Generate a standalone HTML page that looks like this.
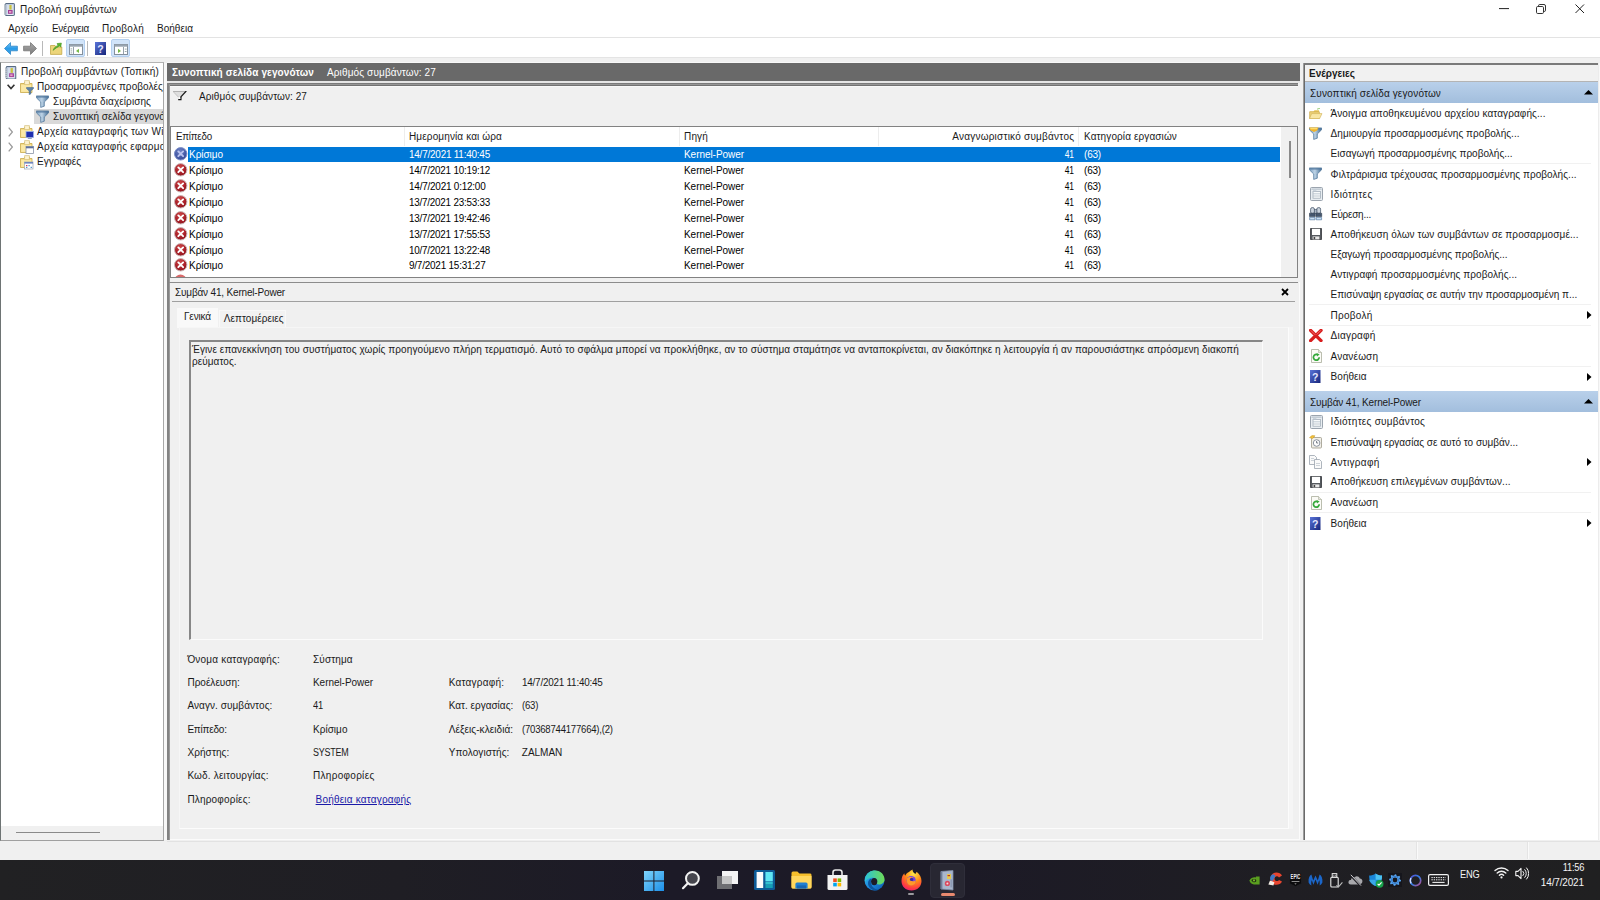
<!DOCTYPE html>
<html lang="el"><head><meta charset="utf-8"><title>Προβολή συμβάντων</title>
<style>
html,body{margin:0;padding:0;overflow:hidden;background:#f0f0f0}
body{width:1600px;height:900px;position:relative;overflow:hidden;background:#f0f0f0;font-family:"Liberation Sans", sans-serif;font-size:10px;line-height:14px;color:#1a1a1a}
div,svg,.t{position:absolute}
.t{white-space:pre;line-height:14px}
</style></head><body>
<div style="left:0px;top:0px;width:1600px;height:58px;background:#fff;"></div>
<div style="left:0px;top:37px;width:1600px;height:1px;background:#e3e3e3;"></div>
<div style="left:0px;top:57px;width:1600px;height:1px;background:#e4e4e4;"></div>
<span class="t" style="top:3.13px;left:20px;letter-spacing:0.206px;">Προβολή συμβάντων</span>
<span class="t" style="top:22.13px;left:8px;letter-spacing:0.023px;">Αρχείο</span>
<span class="t" style="top:22.13px;left:52px;letter-spacing:-0.220px;transform:scaleX(0.9861);transform-origin:0 50%;">Ενέργεια</span>
<span class="t" style="top:22.13px;left:102px;letter-spacing:0.263px;">Προβολή</span>
<span class="t" style="top:22.13px;left:157px;letter-spacing:0.025px;">Βοήθεια</span>
<div style="left:0px;top:62px;width:164px;height:779px;background:#fff;border:1px solid #6e7474;box-sizing:border-box;border-top-color:#b4b4b4;border-right-color:#a8a8a8;border-bottom-color:#a0a0a0"></div>
<div style="left:164px;top:63px;width:3px;height:777px;background:#f8f8f8;"></div>
<div style="left:34px;top:109px;width:129px;height:15px;background:#d9d9d9;"></div>
<div style="left:1px;top:826px;width:162px;height:14px;background:#f0f0f0;"></div>
<div style="left:16px;top:832px;width:84px;height:1px;background:#8a8a8a;"></div>
<div style="left:0;top:0;width:163px;height:840px;overflow:hidden">
<span class="t" style="top:65.14px;left:21px;letter-spacing:0.191px;">Προβολή συμβάντων (Τοπική)</span>
<span class="t" style="top:80.14px;left:37px;letter-spacing:0.068px;">Προσαρμοσμένες προβολές</span>
<span class="t" style="top:95.14px;left:53px;letter-spacing:0.086px;">Συμβάντα διαχείρισης</span>
<span class="t" style="top:110.14px;left:53px;letter-spacing:0.039px;">Συνοπτική σελίδα γεγονότων</span>
<span class="t" style="top:125.14px;left:37px;letter-spacing:0.267px;">Αρχεία καταγραφής των Windows</span>
<span class="t" style="top:140.13px;left:37px;letter-spacing:0.229px;">Αρχεία καταγραφής εφαρμογών και υπηρεσιών</span>
<span class="t" style="top:155.13px;left:37px;letter-spacing:0.012px;">Εγγραφές</span>
</div>
<div style="left:167px;top:62px;width:1133px;height:1px;background:#f8f8f8;"></div>
<div style="left:167px;top:63px;width:1133px;height:18px;background:#696969;"></div>
<div style="left:167px;top:81px;width:1133px;height:2px;background:#e6e6e6;"></div>
<div style="left:167px;top:83px;width:1131px;height:1px;background:#7a7a7a;"></div>
<div style="left:167px;top:84px;width:1131px;height:1px;background:#969696;"></div>
<div style="left:167px;top:85px;width:1131px;height:1px;background:#727272;"></div>
<div style="left:170px;top:86px;width:1128px;height:1px;background:#f8f8f8;"></div>
<span class="t" style="top:66.14px;left:172px;font-weight:700;color:#fff;letter-spacing:0.113px;">Συνοπτική σελίδα γεγονότων</span>
<span class="t" style="top:66.14px;left:327px;color:#fff;letter-spacing:0.129px;">Αριθμός συμβάντων: 27</span>
<div style="left:167px;top:83px;width:2px;height:757px;background:#828282;"></div>
<div style="left:169px;top:85px;width:1px;height:755px;background:#9a9a9a;"></div>
<span class="t" style="top:90.14px;left:199px;letter-spacing:0.081px;">Αριθμός συμβάντων: 27</span>
<div style="left:170px;top:126px;width:1128px;height:152px;background:#fff;border:1px solid #828282;box-sizing:border-box"></div>
<span class="t" style="top:130.13px;left:176px;letter-spacing:-0.220px;transform:scaleX(0.9798);transform-origin:0 50%;">Επίπεδο</span>
<span class="t" style="top:130.13px;left:409px;letter-spacing:0.126px;">Ημερομηνία και ώρα</span>
<span class="t" style="top:130.13px;left:684px;letter-spacing:0.160px;">Πηγή</span>
<span class="t" style="top:130.13px;right:525.77px;letter-spacing:0.231px;">Αναγνωριστικό συμβάντος</span>
<span class="t" style="top:130.13px;left:1084px;letter-spacing:0.110px;">Κατηγορία εργασιών</span>
<div style="left:188px;top:147px;width:1092px;height:15px;background:#0078d7;"></div>
<span class="t" style="top:148.44px;left:189px;color:#fff;letter-spacing:-0.042px;">Κρίσιμο</span>
<span class="t" style="top:148.44px;left:409px;color:#fff;letter-spacing:-0.220px;transform:scaleX(0.9939);transform-origin:0 50%;">14/7/2021 11:40:45</span>
<span class="t" style="top:148.44px;left:684px;color:#fff;letter-spacing:-0.049px;">Kernel-Power</span>
<span class="t" style="top:148.44px;right:526.22px;color:#fff;letter-spacing:-0.220px;transform:scaleX(0.8423);transform-origin:100% 50%;">41</span>
<span class="t" style="top:148.44px;left:1084px;color:#fff;letter-spacing:-0.199px;">(63)</span>
<span class="t" style="top:164.30px;left:189px;color:#000;letter-spacing:-0.042px;">Κρίσιμο</span>
<span class="t" style="top:164.30px;left:409px;color:#000;letter-spacing:-0.220px;transform:scaleX(0.9849);transform-origin:0 50%;">14/7/2021 10:19:12</span>
<span class="t" style="top:164.30px;left:684px;color:#000;letter-spacing:-0.049px;">Kernel-Power</span>
<span class="t" style="top:164.30px;right:526.22px;color:#000;letter-spacing:-0.220px;transform:scaleX(0.8423);transform-origin:100% 50%;">41</span>
<span class="t" style="top:164.30px;left:1084px;color:#000;letter-spacing:-0.199px;">(63)</span>
<span class="t" style="top:180.16px;left:189px;color:#000;letter-spacing:-0.042px;">Κρίσιμο</span>
<span class="t" style="top:180.16px;left:409px;color:#000;letter-spacing:-0.220px;transform:scaleX(0.9948);transform-origin:0 50%;">14/7/2021 0:12:00</span>
<span class="t" style="top:180.16px;left:684px;color:#000;letter-spacing:-0.049px;">Kernel-Power</span>
<span class="t" style="top:180.16px;right:526.22px;color:#000;letter-spacing:-0.220px;transform:scaleX(0.8423);transform-origin:100% 50%;">41</span>
<span class="t" style="top:180.16px;left:1084px;color:#000;letter-spacing:-0.199px;">(63)</span>
<span class="t" style="top:196.01px;left:189px;color:#000;letter-spacing:-0.042px;">Κρίσιμο</span>
<span class="t" style="top:196.01px;left:409px;color:#000;letter-spacing:-0.220px;transform:scaleX(0.9849);transform-origin:0 50%;">13/7/2021 23:53:33</span>
<span class="t" style="top:196.01px;left:684px;color:#000;letter-spacing:-0.049px;">Kernel-Power</span>
<span class="t" style="top:196.01px;right:526.22px;color:#000;letter-spacing:-0.220px;transform:scaleX(0.8423);transform-origin:100% 50%;">41</span>
<span class="t" style="top:196.01px;left:1084px;color:#000;letter-spacing:-0.199px;">(63)</span>
<span class="t" style="top:211.88px;left:189px;color:#000;letter-spacing:-0.042px;">Κρίσιμο</span>
<span class="t" style="top:211.88px;left:409px;color:#000;letter-spacing:-0.220px;transform:scaleX(0.9849);transform-origin:0 50%;">13/7/2021 19:42:46</span>
<span class="t" style="top:211.88px;left:684px;color:#000;letter-spacing:-0.049px;">Kernel-Power</span>
<span class="t" style="top:211.88px;right:526.22px;color:#000;letter-spacing:-0.220px;transform:scaleX(0.8423);transform-origin:100% 50%;">41</span>
<span class="t" style="top:211.88px;left:1084px;color:#000;letter-spacing:-0.199px;">(63)</span>
<span class="t" style="top:227.74px;left:189px;color:#000;letter-spacing:-0.042px;">Κρίσιμο</span>
<span class="t" style="top:227.74px;left:409px;color:#000;letter-spacing:-0.220px;transform:scaleX(0.9849);transform-origin:0 50%;">13/7/2021 17:55:53</span>
<span class="t" style="top:227.74px;left:684px;color:#000;letter-spacing:-0.049px;">Kernel-Power</span>
<span class="t" style="top:227.74px;right:526.22px;color:#000;letter-spacing:-0.220px;transform:scaleX(0.8423);transform-origin:100% 50%;">41</span>
<span class="t" style="top:227.74px;left:1084px;color:#000;letter-spacing:-0.199px;">(63)</span>
<span class="t" style="top:243.59px;left:189px;color:#000;letter-spacing:-0.042px;">Κρίσιμο</span>
<span class="t" style="top:243.59px;left:409px;color:#000;letter-spacing:-0.220px;transform:scaleX(0.9849);transform-origin:0 50%;">10/7/2021 13:22:48</span>
<span class="t" style="top:243.59px;left:684px;color:#000;letter-spacing:-0.049px;">Kernel-Power</span>
<span class="t" style="top:243.59px;right:526.22px;color:#000;letter-spacing:-0.220px;transform:scaleX(0.8423);transform-origin:100% 50%;">41</span>
<span class="t" style="top:243.59px;left:1084px;color:#000;letter-spacing:-0.199px;">(63)</span>
<span class="t" style="top:259.45px;left:189px;color:#000;letter-spacing:-0.042px;">Κρίσιμο</span>
<span class="t" style="top:259.45px;left:409px;color:#000;letter-spacing:-0.220px;transform:scaleX(0.9948);transform-origin:0 50%;">9/7/2021 15:31:27</span>
<span class="t" style="top:259.45px;left:684px;color:#000;letter-spacing:-0.049px;">Kernel-Power</span>
<span class="t" style="top:259.45px;right:526.22px;color:#000;letter-spacing:-0.220px;transform:scaleX(0.8423);transform-origin:100% 50%;">41</span>
<span class="t" style="top:259.45px;left:1084px;color:#000;letter-spacing:-0.199px;">(63)</span>
<div style="left:1281px;top:127px;width:16px;height:150px;background:#f0f0f0;"></div>
<div style="left:1289px;top:141px;width:2px;height:37px;background:#8a8a8a;"></div>
<div style="left:169px;top:282px;width:1129px;height:1px;background:#8c8c8c;"></div>
<span class="t" style="top:286.13px;left:175px;letter-spacing:-0.173px;">Συμβάν 41, Kernel-Power</span>
<div style="left:172px;top:301px;width:1123px;height:1px;background:#a0a0a0;"></div>
<div style="left:177px;top:308px;width:41px;height:20px;background:#f9f9f9;"></div>
<div style="left:179px;top:327px;width:1110px;height:502px;background:#f0f0f0;border-right:1px solid #fcfcfc;border-bottom:1px solid #fcfcfc;border-left:1px solid #f6f6f6;border-top:1px solid #f6f6f6;box-sizing:border-box"></div>
<div style="left:1289px;top:327px;width:4px;height:502px;background:#f5f5f5;"></div>
<div style="left:219px;top:310px;width:67px;height:17px;background:#f2f2f2;border:1px solid #f8f8f8;border-bottom:none;box-sizing:border-box"></div>
<div style="left:1299px;top:282px;width:1px;height:558px;background:#fbfbfb;"></div>
<div style="left:170px;top:839px;width:1130px;height:1px;background:#fbfbfb;"></div>
<span class="t" style="top:310.13px;left:184px;letter-spacing:-0.143px;">Γενικά</span>
<span class="t" style="top:312.13px;left:223.7px;letter-spacing:0.060px;">Λεπτομέρειες</span>
<div style="left:189px;top:340px;width:1074px;height:300px;background:#f0f0f0;border:1px solid #fbfbfb;border-top:2px solid #878787;border-left:2px solid #878787;box-sizing:border-box"></div>
<span class="t" style="top:343.13px;left:192px;letter-spacing:0.089px;">Έγινε επανεκκίνηση του συστήματος χωρίς προηγούμενο πλήρη τερματισμό. Αυτό το σφάλμα μπορεί να προκλήθηκε, αν το σύστημα σταμάτησε να ανταποκρίνεται, αν διακόπηκε η λειτουργία ή αν παρουσιάστηκε απρόσμενη διακοπή</span>
<span class="t" style="top:355.13px;left:192px;letter-spacing:0.062px;">ρεύματος.</span>
<div style="left:1303px;top:63px;width:297px;height:777px;background:#fff;border-left:2px solid #6a6a6a;border-top:2px solid #7a7a7a;box-sizing:border-box"></div>
<div style="left:1598px;top:63px;width:1px;height:777px;background:#ececec;"></div>
<div style="left:1599px;top:63px;width:1px;height:777px;background:#f8f8f8;"></div>
<div style="left:1303px;top:63px;width:1px;height:777px;background:#9c9c9c;"></div>
<div style="left:1305px;top:65px;width:293px;height:16px;background:#f1f1f1;"></div>
<div style="left:1305px;top:81px;width:293px;height:1px;background:#b4b4b4;"></div>
<span class="t" style="top:67.14px;left:1309px;font-weight:700;">Ενέργειες</span>
<div style="left:1305px;top:82px;width:293px;height:21px;background:linear-gradient(#b9d0ea,#a2bedd);"></div>
<span class="t" style="top:87.14px;left:1310px;letter-spacing:0.134px;">Συνοπτική σελίδα γεγονότων</span>
<div style="left:1305px;top:391px;width:293px;height:21px;background:linear-gradient(#b9d0ea,#a2bedd);"></div>
<span class="t" style="top:396.13px;left:1310px;letter-spacing:-0.130px;">Συμβάν 41, Kernel-Power</span>
<div style="left:0px;top:860px;width:1600px;height:40px;background:linear-gradient(90deg,#212123,#1f1e24 25%,#1c1a27 42%,#1c1a26 60%,#1f1e23 80%,#202021);"></div>
<svg style="left:4px;top:42px;" width="14" height="13" viewBox="0 0 14 13"><defs><linearGradient id="ba" x1="0" y1="0" x2="0" y2="1"><stop offset="0" stop-color="#7cc8f6"/><stop offset="0.5" stop-color="#2a9be8"/><stop offset="1" stop-color="#3aa4ea"/></linearGradient></defs><path d="M0.5 6.5 L6.5 0.6 V4.2 H13.4 V8.8 H6.5 V12.4Z" fill="url(#ba)" stroke="#2f86c8" stroke-width="0.8"/></svg>
<svg style="left:23px;top:42px;" width="14" height="13" viewBox="0 0 14 13"><defs><linearGradient id="fa" x1="0" y1="0" x2="0" y2="1"><stop offset="0" stop-color="#a8a8a8"/><stop offset="1" stop-color="#7c7c7c"/></linearGradient></defs><path d="M13.5 6.5 L7.5 0.6 V4.2 H0.6 V8.8 H7.5 V12.4Z" fill="url(#fa)" stroke="#767676" stroke-width="0.8"/></svg>
<div style="left:42px;top:41px;width:1px;height:15px;background:#b9b9b9;"></div>
<svg style="left:50px;top:42px;" width="13" height="13" viewBox="0 0 13 13"><path d="M0.5 3.5 H5 L6.4 5 H11.8 V12.4 H0.5Z" fill="#ecd57a" stroke="#c4a84a" stroke-width="0.8"/><path d="M3 8.4 C4 5.6 6 4 8 3.4 L7 1.6 L11.4 1 L10.8 5.2 L9.6 3.9 C7.4 5 5.4 6.6 3 8.4Z" fill="#5cb531" stroke="#3f8d1e" stroke-width="0.5"/></svg>
<div style="left:66px;top:39px;width:19px;height:18px;background:#d1e4f9;border:1px solid #b4d0f0;box-sizing:border-box;border-radius:2px"></div>
<svg style="left:69px;top:44px;" width="14" height="11" viewBox="0 0 14 11"><rect x="0.5" y="0.5" width="13" height="10" fill="#fff" stroke="#84909c" stroke-width="1"/><rect x="0.5" y="0.5" width="13" height="2.2" fill="#98a4b0"/><path d="M4.5 3V10.5" stroke="#8a96a2" stroke-width="0.9"/><path d="M10 4.8 V9 L7 6.9Z" fill="#76b947"/><rect x="1.6" y="4.4" width="1.6" height="1" fill="#9aa"/><rect x="1.6" y="6.4" width="1.6" height="1" fill="#9aa"/><rect x="1.6" y="8.4" width="1.6" height="1" fill="#9aa"/></svg>
<div style="left:87px;top:41px;width:1px;height:15px;background:#b9b9b9;"></div>
<svg style="left:95px;top:42px;" width="11" height="13" viewBox="0 0 11 13"><defs><linearGradient id="hg95_42" x1="0" y1="0" x2="1" y2="1"><stop offset="0" stop-color="#5a74d8"/><stop offset="1" stop-color="#16257a"/></linearGradient></defs><rect x="0" y="0" width="11" height="13" fill="url(#hg95_42)"/><text x="5.5" y="10.8" font-family="Liberation Sans, sans-serif" font-weight="700" font-size="10.5" fill="#e4e6ff" text-anchor="middle">?</text></svg>
<div style="left:111px;top:39px;width:19px;height:18px;background:#d1e4f9;border:1px solid #b4d0f0;box-sizing:border-box;border-radius:2px"></div>
<svg style="left:114px;top:44px;" width="14" height="11" viewBox="0 0 14 11"><rect x="0.5" y="0.5" width="13" height="10" fill="#fff" stroke="#84909c" stroke-width="1"/><rect x="0.5" y="0.5" width="13" height="2.2" fill="#98a4b0"/><path d="M9.5 3V10.5" stroke="#8a96a2" stroke-width="0.9"/><path d="M4 4.8 V9 L7 6.9Z" fill="#76b947"/><rect x="10.8" y="4.6" width="1.8" height="1" fill="#9aa"/><rect x="10.8" y="7" width="1.8" height="1" fill="#9aa"/></svg>
<svg style="left:3.6px;top:3px;" width="11.0" height="13.0" viewBox="0 0 11 13"><rect x="1.4" y="0.5" width="9" height="12" rx="0.6" fill="#b9c7dc" stroke="#586c84" stroke-width="1"/><rect x="0.2" y="1.4" width="1.6" height="10.4" fill="#9aa6b4"/><path d="M0.2 3H1.8M0.2 5H1.8M0.2 7H1.8M0.2 9H1.8M0.2 11H1.8" stroke="#e8ecf0" stroke-width="0.7"/><rect x="3" y="1.8" width="6.4" height="9.6" fill="#d5deec"/><rect x="5.4" y="2" width="2.2" height="4.6" fill="#c9c23c"/><rect x="4" y="7" width="4.6" height="3.8" fill="#a23c96"/><rect x="5" y="8" width="2.4" height="1.8" fill="#e6a2c6"/><rect x="3.2" y="11" width="6" height="0.8" fill="#eef2f8"/></svg>
<svg style="left:1499px;top:8px;" width="10" height="2" viewBox="0 0 10 2"><path d="M0 0.6H10" stroke="#222" stroke-width="1"/></svg>
<svg style="left:1536px;top:4px;" width="10" height="10" viewBox="0 0 10 10"><rect x="0.5" y="2.5" width="7" height="7" rx="1.2" fill="none" stroke="#333" stroke-width="1"/><path d="M2.5 2.3 V1.8 Q2.5 0.5 3.8 0.5 H8 Q9.5 0.5 9.5 2 V6.2 Q9.5 7.5 8.2 7.5 H7.8" fill="none" stroke="#333" stroke-width="1"/></svg>
<svg style="left:1575px;top:4px;" width="10" height="10" viewBox="0 0 10 10"><path d="M0.5 0.5 L9 9 M9 0.5 L0.5 9" stroke="#222" stroke-width="1"/></svg>
<svg style="left:5.4px;top:65.6px;" width="11.4" height="13.5" viewBox="0 0 11 13"><rect x="1.4" y="0.5" width="9" height="12" rx="0.6" fill="#b9c7dc" stroke="#586c84" stroke-width="1"/><rect x="0.2" y="1.4" width="1.6" height="10.4" fill="#9aa6b4"/><path d="M0.2 3H1.8M0.2 5H1.8M0.2 7H1.8M0.2 9H1.8M0.2 11H1.8" stroke="#e8ecf0" stroke-width="0.7"/><rect x="3" y="1.8" width="6.4" height="9.6" fill="#d5deec"/><rect x="5.4" y="2" width="2.2" height="4.6" fill="#c9c23c"/><rect x="4" y="7" width="4.6" height="3.8" fill="#a23c96"/><rect x="5" y="8" width="2.4" height="1.8" fill="#e6a2c6"/><rect x="3.2" y="11" width="6" height="0.8" fill="#eef2f8"/></svg>
<svg style="left:7px;top:84px;" width="8" height="6" viewBox="0 0 8 6"><path d="M0.6 0.8 L4 4.6 L7.4 0.8" fill="none" stroke="#333" stroke-width="1.6"/></svg>
<svg style="left:20px;top:80px;" width="14" height="15" viewBox="0 0 14 15"><path d="M0.5 3.5 H4 L5 2 H9.5 V3.5 H12 V12.5 H0.5Z" fill="#f5dc86" stroke="#c9a94a" stroke-width="0.8"/><path d="M1.2 5 H11.3 V11.8 H1.2Z" fill="#fbe9a6"/><path d="M4.6 0.6 H9.4 V4.6 H4.6Z" fill="#fdf3cf" stroke="#cdb56a" stroke-width="0.6"/><path d="M6.5 7.5 H13.5 V8.6 L10.8 11 V14 L9.2 14.6 V11 L6.5 8.6Z" fill="#5b82a8" stroke="#3f6288" stroke-width="0.5"/></svg>
<svg style="left:36px;top:95.4px;" width="13" height="13" viewBox="0 0 13 13"><defs><linearGradient id="fg36_95_4" x1="0" y1="0" x2="1" y2="0"><stop offset="0" stop-color="#7ea3c4"/><stop offset="0.45" stop-color="#bdd3e6"/><stop offset="1" stop-color="#3f6a92"/></linearGradient></defs><path d="M0.4 0.9 H12.6 V2.8 L8.3 7 V11.2 L4.7 12.4 V7 L0.4 2.8 Z" fill="url(#fg36_95_4)" stroke="#4a7196" stroke-width="0.7"/><path d="M0.8 1.3 H12.2 V2.5 H0.8Z" fill="#54799e"/></svg>
<svg style="left:36px;top:110.4px;" width="13" height="13" viewBox="0 0 13 13"><defs><linearGradient id="fg36_110_4" x1="0" y1="0" x2="1" y2="0"><stop offset="0" stop-color="#7ea3c4"/><stop offset="0.45" stop-color="#bdd3e6"/><stop offset="1" stop-color="#3f6a92"/></linearGradient></defs><path d="M0.4 0.9 H12.6 V2.8 L8.3 7 V11.2 L4.7 12.4 V7 L0.4 2.8 Z" fill="url(#fg36_110_4)" stroke="#4a7196" stroke-width="0.7"/><path d="M0.8 1.3 H12.2 V2.5 H0.8Z" fill="#54799e"/></svg>
<svg style="left:8px;top:127px;" width="5" height="10" viewBox="0 0 5 10"><path d="M0.7 0.7 L4.4 5 L0.7 9.3" fill="none" stroke="#9a9a9a" stroke-width="1.3"/></svg>
<svg style="left:20px;top:125px;" width="14" height="15" viewBox="0 0 14 15"><path d="M0.5 3.5 H4 L5 2 H9.5 V3.5 H12 V12.5 H0.5Z" fill="#f5dc86" stroke="#c9a94a" stroke-width="0.8"/><path d="M1.2 5 H11.3 V11.8 H1.2Z" fill="#fbe9a6"/><path d="M4.6 0.6 H9.4 V4.6 H4.6Z" fill="#fdf3cf" stroke="#cdb56a" stroke-width="0.6"/><rect x="6" y="6.5" width="7.5" height="6" fill="#1f2fb0" stroke="#9fb4e6" stroke-width="0.8"/><rect x="7.8" y="13" width="4" height="1" fill="#8ea0c8"/></svg>
<svg style="left:8px;top:142px;" width="5" height="10" viewBox="0 0 5 10"><path d="M0.7 0.7 L4.4 5 L0.7 9.3" fill="none" stroke="#9a9a9a" stroke-width="1.3"/></svg>
<svg style="left:20px;top:140px;" width="14" height="15" viewBox="0 0 14 15"><path d="M0.5 3.5 H4 L5 2 H9.5 V3.5 H12 V12.5 H0.5Z" fill="#f5dc86" stroke="#c9a94a" stroke-width="0.8"/><path d="M1.2 5 H11.3 V11.8 H1.2Z" fill="#fbe9a6"/><path d="M4.6 0.6 H9.4 V4.6 H4.6Z" fill="#fdf3cf" stroke="#cdb56a" stroke-width="0.6"/><rect x="6" y="6.5" width="7.5" height="7" fill="#fff" stroke="#8a94a8" stroke-width="0.8"/><rect x="6" y="6.5" width="7.5" height="1.8" fill="#5d6f9c"/></svg>
<svg style="left:20px;top:155px;" width="14" height="15" viewBox="0 0 14 15"><path d="M0.5 3.5 H4 L5 2 H9.5 V3.5 H12 V12.5 H0.5Z" fill="#f5dc86" stroke="#c9a94a" stroke-width="0.8"/><path d="M1.2 5 H11.3 V11.8 H1.2Z" fill="#fbe9a6"/><path d="M4.6 0.6 H9.4 V4.6 H4.6Z" fill="#fdf3cf" stroke="#cdb56a" stroke-width="0.6"/><rect x="4.5" y="7" width="8.5" height="7" fill="#fff" stroke="#9aa4b6" stroke-width="0.7"/><rect x="4.5" y="7" width="8.5" height="1.6" fill="#6f86c0"/><rect x="6" y="10" width="1.4" height="1.2" fill="#d35"/><rect x="8.4" y="10" width="1.4" height="1.2" fill="#59c"/><rect x="10.6" y="11.8" width="1.4" height="1.2" fill="#59c"/><rect x="6" y="11.8" width="1.4" height="1.2" fill="#59c"/></svg>
<svg style="left:173px;top:91px;" width="14" height="10" viewBox="0 0 14 10"><path d="M0.3 0.5 H13 L7.8 6 V8.6 H5.4 V6 Z" fill="#dedede"/><rect x="5.6" y="6" width="2" height="2.4" fill="#fff"/><path d="M0 0.5 H12.6" stroke="#b2b2b2" stroke-width="1"/><path d="M0.3 0.7 L5.5 6.2" stroke="#bcbcbc" stroke-width="0.9"/><path d="M13 0.3 L7.9 5.9" stroke="#1c1c1c" stroke-width="1.3" stroke-linecap="round"/><path d="M5.2 8.6 H8 V5.9" fill="none" stroke="#111" stroke-width="1.1"/></svg>
<svg style="left:174px;top:147.4px;" width="14" height="14" viewBox="0 0 14 14"><defs><radialGradient id="cg174_1474" cx="0.45" cy="0.3" r="0.8"><stop offset="0" stop-color="#6f83c4"/><stop offset="0.55" stop-color="#465aa6"/><stop offset="1" stop-color="#33468c"/></radialGradient></defs><circle cx="6.7" cy="6.8" r="6.2" fill="url(#cg174_1474)" stroke="#7a8cc8" stroke-width="1"/><path d="M4.3 4.4 L9.1 9.2 M9.1 4.4 L4.3 9.2" stroke="#b9c2ee" stroke-width="1.9" stroke-linecap="round"/></svg>
<svg style="left:174px;top:163.26px;" width="14" height="14" viewBox="0 0 14 14"><defs><radialGradient id="cg174_1632" cx="0.45" cy="0.3" r="0.8"><stop offset="0" stop-color="#cf4a4a"/><stop offset="0.55" stop-color="#a81f28"/><stop offset="1" stop-color="#8a141c"/></radialGradient></defs><circle cx="6.7" cy="6.8" r="6.2" fill="url(#cg174_1632)" stroke="#cdb9b9" stroke-width="1"/><path d="M4.3 4.4 L9.1 9.2 M9.1 4.4 L4.3 9.2" stroke="#fff" stroke-width="1.9" stroke-linecap="round"/></svg>
<svg style="left:174px;top:179.12px;" width="14" height="14" viewBox="0 0 14 14"><defs><radialGradient id="cg174_1791" cx="0.45" cy="0.3" r="0.8"><stop offset="0" stop-color="#cf4a4a"/><stop offset="0.55" stop-color="#a81f28"/><stop offset="1" stop-color="#8a141c"/></radialGradient></defs><circle cx="6.7" cy="6.8" r="6.2" fill="url(#cg174_1791)" stroke="#cdb9b9" stroke-width="1"/><path d="M4.3 4.4 L9.1 9.2 M9.1 4.4 L4.3 9.2" stroke="#fff" stroke-width="1.9" stroke-linecap="round"/></svg>
<svg style="left:174px;top:194.98000000000002px;" width="14" height="14" viewBox="0 0 14 14"><defs><radialGradient id="cg174_1949" cx="0.45" cy="0.3" r="0.8"><stop offset="0" stop-color="#cf4a4a"/><stop offset="0.55" stop-color="#a81f28"/><stop offset="1" stop-color="#8a141c"/></radialGradient></defs><circle cx="6.7" cy="6.8" r="6.2" fill="url(#cg174_1949)" stroke="#cdb9b9" stroke-width="1"/><path d="M4.3 4.4 L9.1 9.2 M9.1 4.4 L4.3 9.2" stroke="#fff" stroke-width="1.9" stroke-linecap="round"/></svg>
<svg style="left:174px;top:210.84px;" width="14" height="14" viewBox="0 0 14 14"><defs><radialGradient id="cg174_2108" cx="0.45" cy="0.3" r="0.8"><stop offset="0" stop-color="#cf4a4a"/><stop offset="0.55" stop-color="#a81f28"/><stop offset="1" stop-color="#8a141c"/></radialGradient></defs><circle cx="6.7" cy="6.8" r="6.2" fill="url(#cg174_2108)" stroke="#cdb9b9" stroke-width="1"/><path d="M4.3 4.4 L9.1 9.2 M9.1 4.4 L4.3 9.2" stroke="#fff" stroke-width="1.9" stroke-linecap="round"/></svg>
<svg style="left:174px;top:226.7px;" width="14" height="14" viewBox="0 0 14 14"><defs><radialGradient id="cg174_2267" cx="0.45" cy="0.3" r="0.8"><stop offset="0" stop-color="#cf4a4a"/><stop offset="0.55" stop-color="#a81f28"/><stop offset="1" stop-color="#8a141c"/></radialGradient></defs><circle cx="6.7" cy="6.8" r="6.2" fill="url(#cg174_2267)" stroke="#cdb9b9" stroke-width="1"/><path d="M4.3 4.4 L9.1 9.2 M9.1 4.4 L4.3 9.2" stroke="#fff" stroke-width="1.9" stroke-linecap="round"/></svg>
<svg style="left:174px;top:242.56px;" width="14" height="14" viewBox="0 0 14 14"><defs><radialGradient id="cg174_2425" cx="0.45" cy="0.3" r="0.8"><stop offset="0" stop-color="#cf4a4a"/><stop offset="0.55" stop-color="#a81f28"/><stop offset="1" stop-color="#8a141c"/></radialGradient></defs><circle cx="6.7" cy="6.8" r="6.2" fill="url(#cg174_2425)" stroke="#cdb9b9" stroke-width="1"/><path d="M4.3 4.4 L9.1 9.2 M9.1 4.4 L4.3 9.2" stroke="#fff" stroke-width="1.9" stroke-linecap="round"/></svg>
<svg style="left:174px;top:258.42px;" width="14" height="14" viewBox="0 0 14 14"><defs><radialGradient id="cg174_2584" cx="0.45" cy="0.3" r="0.8"><stop offset="0" stop-color="#cf4a4a"/><stop offset="0.55" stop-color="#a81f28"/><stop offset="1" stop-color="#8a141c"/></radialGradient></defs><circle cx="6.7" cy="6.8" r="6.2" fill="url(#cg174_2584)" stroke="#cdb9b9" stroke-width="1"/><path d="M4.3 4.4 L9.1 9.2 M9.1 4.4 L4.3 9.2" stroke="#fff" stroke-width="1.9" stroke-linecap="round"/></svg>
<div style="left:174px;top:274px;width:13px;height:3px;overflow:hidden"><svg style="left:0;top:0" width="13" height="13"><circle cx="6.5" cy="6.5" r="6" fill="#d86a6a"/></svg></div>
<div style="left:404px;top:127px;width:1px;height:19px;background:#ededed;"></div>
<div style="left:679px;top:127px;width:1px;height:19px;background:#ededed;"></div>
<div style="left:878px;top:127px;width:1px;height:19px;background:#ededed;"></div>
<div style="left:1078px;top:127px;width:1px;height:19px;background:#ededed;"></div>
<svg style="left:1281px;top:288px;" width="8" height="8" viewBox="0 0 8 8"><path d="M1 1 L7 7 M7 1 L1 7" stroke="#000" stroke-width="1.8"/></svg>
<span class="t" style="top:652.63px;left:187.4px;letter-spacing:0.212px;">Όνομα καταγραφής:</span>
<span class="t" style="top:676.13px;left:187.4px;letter-spacing:0.013px;">Προέλευση:</span>
<span class="t" style="top:699.13px;left:187.4px;letter-spacing:0.074px;">Αναγν. συμβάντος:</span>
<span class="t" style="top:722.63px;left:187.4px;letter-spacing:-0.220px;">Επίπεδο:</span>
<span class="t" style="top:746.13px;left:187.4px;letter-spacing:0.100px;">Χρήστης:</span>
<span class="t" style="top:769.13px;left:187.4px;letter-spacing:0.177px;">Κωδ. λειτουργίας:</span>
<span class="t" style="top:792.63px;left:187.4px;letter-spacing:0.188px;">Πληροφορίες:</span>
<span class="t" style="top:652.63px;left:313px;letter-spacing:0.116px;">Σύστημα</span>
<span class="t" style="top:676.13px;left:313px;letter-spacing:-0.049px;">Kernel-Power</span>
<span class="t" style="top:699.13px;left:313px;letter-spacing:-0.220px;transform:scaleX(0.9359);transform-origin:0 50%;">41</span>
<span class="t" style="top:722.63px;left:313px;letter-spacing:0.029px;">Κρίσιμο</span>
<span class="t" style="top:746.13px;left:313px;letter-spacing:-0.220px;transform:scaleX(0.8944);transform-origin:0 50%;">SYSTEM</span>
<span class="t" style="top:769.13px;left:313px;letter-spacing:0.293px;">Πληροφορίες</span>
<span class="t" style="top:792.63px;left:315.6px;color:#1a1aa8;letter-spacing:0.190px;text-decoration:underline;">Βοήθεια καταγραφής</span>
<span class="t" style="top:676.13px;left:448.7px;letter-spacing:0.228px;">Καταγραφή:</span>
<span class="t" style="top:699.13px;left:448.7px;">Κατ. εργασίας:</span>
<span class="t" style="top:722.63px;left:448.7px;letter-spacing:0.068px;">Λέξεις-κλειδιά:</span>
<span class="t" style="top:746.13px;left:448.7px;letter-spacing:0.090px;">Υπολογιστής:</span>
<span class="t" style="top:676.13px;left:521.8px;letter-spacing:-0.220px;transform:scaleX(0.9890);transform-origin:0 50%;">14/7/2021 11:40:45</span>
<span class="t" style="top:699.13px;left:521.8px;letter-spacing:-0.220px;transform:scaleX(0.9576);transform-origin:0 50%;">(63)</span>
<span class="t" style="top:722.63px;left:521.8px;letter-spacing:-0.220px;transform:scaleX(0.9545);transform-origin:0 50%;">(70368744177664),(2)</span>
<span class="t" style="top:746.13px;left:521.8px;letter-spacing:-0.010px;">ZALMAN</span>
<span class="t" style="top:107.14px;left:1330.6px;letter-spacing:0.095px;">Άνοιγμα αποθηκευμένου αρχείου καταγραφής...</span>
<svg style="left:1309px;top:108px;" width="14" height="11" viewBox="0 0 14 11"><path d="M0.8 3.5 H4.5 L5.5 2.3 H10 V4 H0.8Z" fill="#e8c65a"/><path d="M0.6 3.8 H10.4 V10.4 H0.6Z" fill="#eed27a" stroke="#c7a445" stroke-width="0.6"/><path d="M2.6 5.6 H13 L10.6 10.6 H0.5Z" fill="#f8e6a4" stroke="#cfae50" stroke-width="0.6"/><path d="M8 1.2 L11 0.2" stroke="#7dc15a" stroke-width="0.8"/></svg>
<span class="t" style="top:127.14px;left:1330.6px;letter-spacing:0.043px;">Δημιουργία προσαρμοσμένης προβολής...</span>
<svg style="left:1309px;top:127px;" width="13" height="13" viewBox="0 0 13 13"><defs><linearGradient id="fg1309_127" x1="0" y1="0" x2="1" y2="0"><stop offset="0" stop-color="#7ea3c4"/><stop offset="0.45" stop-color="#bdd3e6"/><stop offset="1" stop-color="#3f6a92"/></linearGradient></defs><path d="M0.4 0.9 H12.6 V2.8 L8.3 7 V11.2 L4.7 12.4 V7 L0.4 2.8 Z" fill="url(#fg1309_127)" stroke="#4a7196" stroke-width="0.7"/><path d="M0.8 1.3 H12.2 V2.5 H0.8Z" fill="#54799e"/><path d="M0 0.4 H9.6 L8.2 3.4 L5 5 L1.4 3.2Z" fill="#f0b42c"/><path d="M1 0.8H8.6L7.8 2.2H1.8Z" fill="#ffdc6a"/></svg>
<span class="t" style="top:147.13px;left:1330.6px;letter-spacing:0.010px;">Εισαγωγή προσαρμοσμένης προβολής...</span>
<span class="t" style="top:167.53px;left:1330.6px;letter-spacing:0.055px;">Φιλτράρισμα τρέχουσας προσαρμοσμένης προβολής...</span>
<svg style="left:1309px;top:167px;" width="13" height="13" viewBox="0 0 13 13"><defs><linearGradient id="fg1309_167" x1="0" y1="0" x2="1" y2="0"><stop offset="0" stop-color="#7ea3c4"/><stop offset="0.45" stop-color="#bdd3e6"/><stop offset="1" stop-color="#3f6a92"/></linearGradient></defs><path d="M0.4 0.9 H12.6 V2.8 L8.3 7 V11.2 L4.7 12.4 V7 L0.4 2.8 Z" fill="url(#fg1309_167)" stroke="#4a7196" stroke-width="0.7"/><path d="M0.8 1.3 H12.2 V2.5 H0.8Z" fill="#54799e"/></svg>
<span class="t" style="top:187.63px;left:1330.6px;letter-spacing:0.363px;">Ιδιότητες</span>
<svg style="left:1310px;top:187px;" width="13" height="14" viewBox="0 0 13 14"><rect x="0.5" y="0.5" width="12" height="13" rx="1" fill="#e9eef2" stroke="#9ba4ae"/><rect x="1.4" y="1.4" width="10.2" height="1.6" fill="#c5ced6"/><rect x="3" y="4.4" width="7.4" height="6.8" fill="#f8fafb" stroke="#a3aeb9" stroke-width="0.8"/><path d="M3 6.8H10.4M3 9H10.4" stroke="#b3bec9" stroke-width="0.8"/><rect x="3" y="3.4" width="3.4" height="1.4" fill="#b9c3cd"/></svg>
<span class="t" style="top:207.73px;left:1330.6px;letter-spacing:-0.220px;transform:scaleX(0.9906);transform-origin:0 50%;">Εύρεση...</span>
<svg style="left:1309px;top:207px;" width="14" height="14" viewBox="0 0 14 14"><rect x="1.6" y="0.6" width="3.8" height="6" rx="1.6" fill="#c9d2dc" stroke="#4a5a6e" stroke-width="0.8"/><rect x="7.8" y="0.6" width="3.8" height="6" rx="1.6" fill="#c9d2dc" stroke="#4a5a6e" stroke-width="0.8"/><rect x="5.4" y="2.4" width="2.4" height="4" fill="#aab6c4" stroke="#4a5a6e" stroke-width="0.6"/><path d="M0.5 6.2 H6.2 V9.6 H0.5Z M7 6.2 H12.7 V9.6 H7Z" fill="#44566e" stroke="#2c3a4e" stroke-width="0.6"/><path d="M0.6 10.4 H6 V12.8 H0.6Z M7.2 10.4 H12.6 V12.8 H7.2Z" fill="#a9cbe8" stroke="#52749c" stroke-width="0.6"/><path d="M1.4 11.6H5.2M8 11.6H11.8" stroke="#e8f2fa" stroke-width="0.6"/></svg>
<span class="t" style="top:227.83px;left:1330.6px;letter-spacing:0.099px;">Αποθήκευση όλων των συμβάντων σε προσαρμοσμέ...</span>
<svg style="left:1310px;top:228px;" width="12" height="12" viewBox="0 0 12 12"><path d="M0.5 0.5 H11.5 V11.5 H0.5Z" fill="#55595e" stroke="#33363a" stroke-width="0.8"/><rect x="2" y="0.8" width="8" height="6.2" fill="#fff"/><rect x="2.6" y="8.4" width="6.8" height="3" fill="#e8e8e8"/><rect x="3.6" y="9" width="1.6" height="2.2" fill="#444"/></svg>
<span class="t" style="top:247.94px;left:1330.6px;letter-spacing:-0.014px;">Εξαγωγή προσαρμοσμένης προβολής...</span>
<span class="t" style="top:268.03px;left:1330.6px;letter-spacing:0.083px;">Αντιγραφή προσαρμοσμένης προβολής...</span>
<span class="t" style="top:288.13px;left:1330.6px;letter-spacing:-0.022px;">Επισύναψη εργασίας σε αυτήν την προσαρμοσμένη π...</span>
<span class="t" style="top:308.74px;left:1330.6px;letter-spacing:0.263px;">Προβολή</span>
<svg style="left:1587px;top:311px;" width="5" height="8" viewBox="0 0 5 8"><path d="M0 0 L4.5 4 L0 8Z" fill="#000"/></svg>
<span class="t" style="top:329.13px;left:1330.6px;letter-spacing:0.225px;">Διαγραφή</span>
<svg style="left:1309px;top:329px;" width="14" height="13" viewBox="0 0 14 13"><path d="M1.6 1.4 L12 11.6 M12 1.4 L1.6 11.6" stroke="#d81e1e" stroke-width="3.4" stroke-linecap="round"/><path d="M2 1.6 L6 5.6 M11.6 1.6 L8 5.2" stroke="#f26a6a" stroke-width="1" stroke-linecap="round"/></svg>
<span class="t" style="top:349.53px;left:1330.6px;letter-spacing:0.165px;">Ανανέωση</span>
<svg style="left:1311px;top:349px;" width="11" height="14" viewBox="0 0 11 14"><path d="M0.5 0.5 H7.5 L10.5 3.5 V13.5 H0.5Z" fill="#fbfbf6" stroke="#a9ad9c" stroke-width="0.8"/><path d="M7.5 0.5 V3.5 H10.5" fill="#e4e6da" stroke="#a9ad9c" stroke-width="0.6"/><path d="M8.2 8.3 A2.9 2.9 0 1 1 6.6 5.7" fill="none" stroke="#35a83a" stroke-width="1.7"/><path d="M5.6 4 L8.6 5.4 L6 7.4Z" fill="#35a83a"/></svg>
<span class="t" style="top:370.44px;left:1330.6px;letter-spacing:0.025px;">Βοήθεια</span>
<svg style="left:1310px;top:370px;" width="10.5" height="13" viewBox="0 0 10.5 13"><defs><linearGradient id="hg1310_370" x1="0" y1="0" x2="1" y2="1"><stop offset="0" stop-color="#5a74d8"/><stop offset="1" stop-color="#16257a"/></linearGradient></defs><rect x="0" y="0" width="10.5" height="13" fill="url(#hg1310_370)"/><text x="5.25" y="10.8" font-family="Liberation Sans, sans-serif" font-weight="700" font-size="10.5" fill="#e4e6ff" text-anchor="middle">?</text></svg>
<svg style="left:1587px;top:373px;" width="5" height="8" viewBox="0 0 5 8"><path d="M0 0 L4.5 4 L0 8Z" fill="#000"/></svg>
<span class="t" style="top:415.44px;left:1330.6px;letter-spacing:0.256px;">Ιδιότητες συμβάντος</span>
<svg style="left:1310px;top:415px;" width="13" height="14" viewBox="0 0 13 14"><rect x="0.5" y="0.5" width="12" height="13" rx="1" fill="#e9eef2" stroke="#9ba4ae"/><rect x="1.4" y="1.4" width="10.2" height="1.6" fill="#c5ced6"/><rect x="3" y="4.4" width="7.4" height="6.8" fill="#f8fafb" stroke="#a3aeb9" stroke-width="0.8"/><path d="M3 6.8H10.4M3 9H10.4" stroke="#b3bec9" stroke-width="0.8"/><rect x="3" y="3.4" width="3.4" height="1.4" fill="#b9c3cd"/></svg>
<span class="t" style="top:435.63px;left:1330.6px;letter-spacing:-0.006px;">Επισύναψη εργασίας σε αυτό το συμβάν...</span>
<svg style="left:1309px;top:435px;" width="13" height="14" viewBox="0 0 13 14"><rect x="2.5" y="2.5" width="10" height="10.5" rx="1" fill="#f1efe8" stroke="#9c9889" stroke-width="0.8"/><circle cx="7.6" cy="8" r="3.3" fill="#fff" stroke="#7e8794" stroke-width="0.9"/><path d="M7.6 6 V8 H9.2" stroke="#55606e" stroke-width="0.8" fill="none"/><path d="M0.5 2.6 L3 0.6 L6 0.8 L3.6 3.6Z" fill="#f2c23a" stroke="#c9951c" stroke-width="0.5"/></svg>
<span class="t" style="top:455.63px;left:1330.6px;letter-spacing:0.312px;">Αντιγραφή</span>
<svg style="left:1309px;top:455px;" width="13" height="14" viewBox="0 0 13 14"><path d="M0.5 0.5 H5.5 L7.5 2.5 V9.5 H0.5Z" fill="#fafafa" stroke="#9aa3ad" stroke-width="0.8"/><path d="M5.5 4.5 H10.5 L12.5 6.5 V13.5 H5.5Z" fill="#fafafa" stroke="#9aa3ad" stroke-width="0.8"/><path d="M2 3.5H5M2 5.5H5M7 8.5H11M7 10.5H11" stroke="#b9c1ca" stroke-width="0.7"/></svg>
<svg style="left:1587px;top:458px;" width="5" height="8" viewBox="0 0 5 8"><path d="M0 0 L4.5 4 L0 8Z" fill="#000"/></svg>
<span class="t" style="top:475.44px;left:1330.6px;letter-spacing:0.078px;">Αποθήκευση επιλεγμένων συμβάντων...</span>
<svg style="left:1310px;top:476px;" width="12" height="12" viewBox="0 0 12 12"><path d="M0.5 0.5 H11.5 V11.5 H0.5Z" fill="#55595e" stroke="#33363a" stroke-width="0.8"/><rect x="2" y="0.8" width="8" height="6.2" fill="#fff"/><rect x="2.6" y="8.4" width="6.8" height="3" fill="#e8e8e8"/><rect x="3.6" y="9" width="1.6" height="2.2" fill="#444"/></svg>
<span class="t" style="top:496.13px;left:1330.6px;letter-spacing:0.165px;">Ανανέωση</span>
<svg style="left:1311px;top:496px;" width="11" height="14" viewBox="0 0 11 14"><path d="M0.5 0.5 H7.5 L10.5 3.5 V13.5 H0.5Z" fill="#fbfbf6" stroke="#a9ad9c" stroke-width="0.8"/><path d="M7.5 0.5 V3.5 H10.5" fill="#e4e6da" stroke="#a9ad9c" stroke-width="0.6"/><path d="M8.2 8.3 A2.9 2.9 0 1 1 6.6 5.7" fill="none" stroke="#35a83a" stroke-width="1.7"/><path d="M5.6 4 L8.6 5.4 L6 7.4Z" fill="#35a83a"/></svg>
<span class="t" style="top:516.84px;left:1330.6px;letter-spacing:0.025px;">Βοήθεια</span>
<svg style="left:1310px;top:517px;" width="10.5" height="13" viewBox="0 0 10.5 13"><defs><linearGradient id="hg1310_517" x1="0" y1="0" x2="1" y2="1"><stop offset="0" stop-color="#5a74d8"/><stop offset="1" stop-color="#16257a"/></linearGradient></defs><rect x="0" y="0" width="10.5" height="13" fill="url(#hg1310_517)"/><text x="5.25" y="10.8" font-family="Liberation Sans, sans-serif" font-weight="700" font-size="10.5" fill="#e4e6ff" text-anchor="middle">?</text></svg>
<svg style="left:1587px;top:519px;" width="5" height="8" viewBox="0 0 5 8"><path d="M0 0 L4.5 4 L0 8Z" fill="#000"/></svg>
<div style="left:1309px;top:163px;width:282px;height:1px;background:#f1f1f1;"></div>
<div style="left:1309px;top:304px;width:282px;height:1px;background:#f1f1f1;"></div>
<div style="left:1309px;top:325px;width:282px;height:1px;background:#f1f1f1;"></div>
<div style="left:1309px;top:366px;width:282px;height:1px;background:#f1f1f1;"></div>
<div style="left:1309px;top:492px;width:282px;height:1px;background:#f1f1f1;"></div>
<div style="left:1309px;top:512px;width:282px;height:1px;background:#f1f1f1;"></div>
<svg style="left:1584px;top:90px;" width="9" height="5" viewBox="0 0 9 5"><path d="M0 4.5 L4.5 0 L9 4.5Z" fill="#000"/></svg>
<svg style="left:1584px;top:399px;" width="9" height="5" viewBox="0 0 9 5"><path d="M0 4.5 L4.5 0 L9 4.5Z" fill="#000"/></svg>
<svg style="left:644px;top:871px;" width="20" height="20" viewBox="0 0 20 20"><defs><linearGradient id="wl" x1="0" y1="0" x2="1" y2="1"><stop offset="0" stop-color="#7fd4fb"/><stop offset="1" stop-color="#1c8fe8"/></linearGradient></defs><path d="M0 0H9.4V9.4H0Z M10.4 0H20V9.4H10.4Z M0 10.4H9.4V20H0Z M10.4 10.4H20V20H10.4Z" fill="url(#wl)"/></svg>
<svg style="left:681px;top:870px;" width="20" height="20" viewBox="0 0 20 20"><circle cx="11.4" cy="8.4" r="6.4" fill="#45454d" stroke="#f2f2f2" stroke-width="2"/><path d="M6.6 13.4 L2 18.2" stroke="#f2f2f2" stroke-width="2.2" stroke-linecap="round"/></svg>
<svg style="left:717px;top:871px;" width="21" height="19" viewBox="0 0 21 19"><rect x="0" y="5" width="15" height="13" fill="#6e6e72"/><rect x="5" y="0" width="16" height="13" fill="#f4f4f4"/><rect x="5" y="5" width="10" height="8" fill="#c6c6c6"/></svg>
<svg style="left:754px;top:870px;" width="21" height="20" viewBox="0 0 21 20"><rect x="0" y="0" width="21" height="20" rx="1.5" fill="#0c5a96"/><rect x="2.6" y="2" width="6.6" height="16" fill="#fbfbfb"/><rect x="11.4" y="2" width="7.4" height="9.4" fill="#5fe6f4"/><rect x="11.4" y="12" width="7.4" height="2.6" fill="#2fc0cf"/><rect x="11.4" y="15" width="7.4" height="3" fill="#159fb4"/></svg>
<svg style="left:791px;top:871px;" width="21" height="18" viewBox="0 0 21 18"><path d="M0.5 2 Q0.5 0.5 2 0.5 H6.4 L8.4 2.6 H19 Q20.5 2.6 20.5 4 V16 Q20.5 17.5 19 17.5 H2 Q0.5 17.5 0.5 16Z" fill="#f6bf2c"/><path d="M0.5 5 H20.5 V16 Q20.5 17.5 19 17.5 H2 Q0.5 17.5 0.5 16Z" fill="#ffd75e"/><path d="M4.4 17.5 V13 Q4.4 11.4 6 11.4 H15 Q16.6 11.4 16.6 13 V17.5Z" fill="#1f7fd1"/><rect x="6" y="14.4" width="9" height="3.1" fill="#1565b3"/></svg>
<svg style="left:827px;top:869px;" width="21" height="22" viewBox="0 0 21 22"><path d="M6 6.5 V3.5 Q6 1 8.5 1 H12.5 Q15 1 15 3.5 V6.5" fill="none" stroke="#e9e9e9" stroke-width="1.6"/><path d="M0.5 6 H20.5 V19.5 Q20.5 21 19 21 H2 Q0.5 21 0.5 19.5Z" fill="#f3f3f3"/><rect x="6.2" y="9.4" width="3.6" height="3.6" fill="#f25022"/><rect x="10.6" y="9.4" width="3.6" height="3.6" fill="#7fba00"/><rect x="6.2" y="13.8" width="3.6" height="3.6" fill="#00a4ef"/><rect x="10.6" y="13.8" width="3.6" height="3.6" fill="#ffb900"/></svg>
<svg style="left:864px;top:870px;" width="21" height="21" viewBox="0 0 21 21"><defs><linearGradient id="ed1" x1="0" y1="0" x2="1" y2="1"><stop offset="0" stop-color="#35c1f1"/><stop offset="0.6" stop-color="#1a80d9"/><stop offset="1" stop-color="#0c59a4"/></linearGradient><linearGradient id="ed2" x1="0" y1="0" x2="1" y2="0"><stop offset="0" stop-color="#2bc4d6"/><stop offset="1" stop-color="#6fdc55"/></linearGradient></defs><circle cx="10.5" cy="10.5" r="10" fill="url(#ed1)"/><path d="M1 9 C2 3 7 0.5 11 0.5 C17 0.5 20.5 5 20.5 9.5 C20.5 13 17.5 14.5 15 14.5 C12.6 14.5 12 13 12.6 12 C13.4 10.6 12.4 7.4 8.6 7.4 C4.6 7.4 2 9.6 1 12Z" fill="url(#ed2)"/><path d="M7 12 C7 16 10 19.5 15 19.6 C11 22 4 19 4 13 C4 10.5 5.5 9 7.5 8.4 C7 9.4 7 10.6 7 12Z" fill="#0d57a0"/><ellipse cx="10.2" cy="11.6" rx="3.1" ry="3.6" fill="#1d1b26"/></svg>
<svg style="left:901px;top:869px;" width="21" height="22" viewBox="0 0 21 22"><defs><radialGradient id="ff1" cx="0.6" cy="0.2" r="0.9"><stop offset="0" stop-color="#ffe94a"/><stop offset="0.45" stop-color="#ff8a16"/><stop offset="0.8" stop-color="#ff3647"/><stop offset="1" stop-color="#e31587"/></radialGradient></defs><path d="M10.5 21.5 C4.6 21.5 0.5 17.4 0.5 12 C0.5 8 2 5.4 3.4 4.2 C3.4 5.4 3.8 6.2 4.4 6.6 C5 4.6 6.6 3.4 8 3 C9 1.8 10.6 0.8 11.6 0.4 C11.4 2 12.4 3.6 14.4 5 C15 3.8 15.4 3.4 15.6 2.8 C18.8 5 20.5 8.6 20.5 12 C20.5 17.4 16.4 21.5 10.5 21.5Z" fill="url(#ff1)"/><circle cx="10.2" cy="11.6" r="4.6" fill="#7542e5"/><path d="M6 9.4 C7.5 7.6 11 7.4 12.6 9 C10.6 8.8 9.6 10 10.4 11.4 C11.2 12.8 13.6 12.6 14.4 11 C15.4 14.4 12.6 16.6 10 16.4 C7 16.2 5 13 6 9.4Z" fill="#ff9a2a"/><circle cx="10.6" cy="10.4" r="1.7" fill="#3b2aa0"/></svg>
<div style="left:908px;top:893px;width:6px;height:2px;background:#9a9a9e;border-radius:1px"></div>
<div style="left:930px;top:863px;width:35px;height:35px;background:#282732;border-radius:4px;border:1px solid #2f2e3a;box-sizing:border-box"></div>
<svg style="left:940px;top:870px;" width="14" height="21" viewBox="0 0 14 21"><path d="M1 1.5 L13 0.5 V20 L1 19Z" fill="#a9b6cc" stroke="#7f8da6" stroke-width="0.8"/><path d="M0.6 1.6 L2.4 1.4 V19.2 L0.6 19Z" fill="#6f7d98"/><rect x="7" y="4" width="4" height="5" fill="#e6c84a"/><rect x="7.6" y="5" width="2.4" height="1.2" fill="#b33"/><circle cx="7.4" cy="13.4" r="2.6" fill="#d94a5e"/><circle cx="7.4" cy="13.4" r="1" fill="#f3d9dd"/><rect x="10.4" y="9.4" width="1.6" height="8" fill="#8d9ab4"/></svg>
<div style="left:941px;top:893px;width:14px;height:3px;background:#e8896f;border-radius:1.5px"></div>
<svg style="left:1249px;top:876px;" width="11" height="9" viewBox="0 0 11 9"><path d="M0.4 4.4 C2 1.6 5 0.8 7 1.6 V0.4 H10.6 V8.6 H5 C2.6 8 1 6.4 0.4 4.4Z" fill="#5a9e1f"/><path d="M2.4 4.4 C3.4 3 5 2.6 6.4 3.2 C7.4 3.8 7.6 5 6.8 5.8 C5.8 6.6 3.4 6.2 2.4 4.4Z" fill="#1f2a14"/><circle cx="5" cy="4.4" r="1.1" fill="#76b82a"/></svg>
<svg style="left:1268px;top:872px;" width="15" height="15" viewBox="0 0 15 15"><path d="M5 1.4 C8 -0.4 12.6 0.6 14 3.6 L11 5.4 C10 4 8.2 4 7.2 5 C6 6.4 6.6 8.6 8.4 9 C9.6 9.2 10.6 8.6 11 8 L14 9.6 C12.6 12.6 8.6 13.6 5.6 12.2 C2 10.4 1.6 4 5 1.4Z" fill="#e8452f"/><path d="M3.6 3 C5 2.2 6.6 2.6 7.4 4 L4.6 9 L2.4 8 C1.6 6.4 2.2 4 3.6 3Z" fill="#3a78c8"/><path d="M2 8.4 L6.4 10.2 L5.4 13.4 L0.4 12.6Z" fill="#f3ede4"/></svg>
<svg style="left:1289px;top:873px;" width="13" height="14" viewBox="0 0 13 14"><path d="M0.6 0.6 H12.4 V10.4 L6.5 13.6 L0.6 10.4Z" fill="#0b0b0d" stroke="#2a2a2e" stroke-width="0.4"/><text x="6.5" y="6.4" font-family="Liberation Sans, sans-serif" font-weight="700" font-size="6.6" fill="#f4f4f4" text-anchor="middle" textLength="9.8" lengthAdjust="spacingAndGlyphs">EPIC</text><rect x="2.6" y="8" width="7.8" height="0.9" fill="#9a9a9a"/><path d="M5.4 10.6 H7.6 L6.5 11.4Z" fill="#ccc"/></svg>
<svg style="left:1308px;top:874px;" width="15" height="12" viewBox="0 0 15 12"><path d="M0.6 8.4 C0.2 4.6 1.6 1.6 3.4 0.6 L5.2 6.6 L7.5 1.4 L9.8 6.6 L11.6 0.6 C13.4 1.6 14.8 4.6 14.4 8.4 C13.6 10 12.6 11 11.6 11.4 C12 9 11.6 7 11.2 6.2 L9.6 10.8 L7.5 5.6 L5.4 10.8 L3.8 6.2 C3.4 7 3 9 3.4 11.4 C2.4 11 1.4 10 0.6 8.4Z" fill="#1b66c9"/></svg>
<svg style="left:1330px;top:873px;" width="13" height="15" viewBox="0 0 13 15"><rect x="2.2" y="0.6" width="4.6" height="3.6" fill="none" stroke="#e8e8e8" stroke-width="1"/><rect x="0.8" y="4.2" width="7.4" height="9.8" rx="1" fill="none" stroke="#e8e8e8" stroke-width="1.1"/><rect x="3.4" y="1.8" width="0.9" height="0.9" fill="#e8e8e8"/><rect x="4.9" y="1.8" width="0.9" height="0.9" fill="#e8e8e8"/><path d="M6.4 12.4 L8.4 14 L12.4 9.4" fill="none" stroke="#bdbdbd" stroke-width="1.1"/></svg>
<svg style="left:1348px;top:874px;" width="15" height="13" viewBox="0 0 15 13"><path d="M3 10.4 C0.8 10.4 0 8.8 0.6 7.4 C1 6.2 2.2 5.8 3 6 C3.2 4 5 2.8 6.8 3.2 C8 1.8 11 2 11.8 4.6 C13.6 4.6 14.6 6 14.4 7.6 C14.2 9.4 13 10.4 11.6 10.4Z" fill="#a8a8ac"/><path d="M2.4 1 L12.8 12" stroke="#1e1d24" stroke-width="2.2"/><path d="M2.8 0.8 L13 11.6" stroke="#d0d0d2" stroke-width="1"/></svg>
<svg style="left:1369px;top:873px;" width="15" height="15" viewBox="0 0 15 15"><path d="M6.6 0.4 C8.4 1.8 10.6 2.4 13 2.4 C13.2 7.4 11.4 11 6.6 13 C1.8 11 0 7.4 0.2 2.4 C2.6 2.4 4.8 1.8 6.6 0.4Z" fill="#1a86d8"/><path d="M6.6 0.4 C8.4 1.8 10.6 2.4 13 2.4 C13.1 4 13 5.4 12.6 6.8 H6.6Z" fill="#4cc2f0"/><path d="M6.6 6.8 V13 C1.8 11 0 7.4 0.2 6.8Z" fill="#3aa8e8"/><circle cx="10.6" cy="10.8" r="3.9" fill="#18a34a"/><path d="M8.6 10.8 L10 12.2 L12.6 9.4" fill="none" stroke="#fff" stroke-width="1.1"/></svg>
<svg style="left:1388px;top:873px;" width="14" height="14" viewBox="0 0 14 14"><rect x="0" y="0" width="14" height="14" fill="#16161c"/><path d="M7 1.2 L8.2 1.4 L8.6 2.8 L9.8 3.4 L11.2 2.8 L12.2 4 L11.4 5.2 L11.8 6.4 L13 7 L12.8 8.4 L11.4 8.6 L10.8 9.8 L11.4 11.2 L10.2 12 L9 11.2 L7.8 11.6 L7.2 12.8 L5.8 12.8 L5.4 11.4 L4.2 10.8 L2.8 11.4 L2 10.2 L2.8 9 L2.4 7.8 L1.2 7.2 L1.2 5.8 L2.6 5.4 L3.2 4.2 L2.6 2.8 L3.8 2 L5 2.8 L6.2 2.4Z" fill="#58a6f0"/><circle cx="7" cy="7" r="2.4" fill="#16161c"/><circle cx="7" cy="7" r="3.6" fill="none" stroke="#2c6fc0" stroke-width="0.8"/></svg>
<svg style="left:1409px;top:874px;" width="13" height="13" viewBox="0 0 13 13"><defs><linearGradient id="rg" x1="0" y1="0" x2="1" y2="1"><stop offset="0" stop-color="#5a4fd0"/><stop offset="0.5" stop-color="#2f7fe8"/><stop offset="1" stop-color="#c04a8a"/></linearGradient></defs><circle cx="6.5" cy="6.5" r="5.2" fill="none" stroke="url(#rg)" stroke-width="1.7"/><path d="M2.2 9.4 A5.2 5.2 0 0 1 2 4.2" fill="none" stroke="#cfe0ff" stroke-width="1.4"/></svg>
<svg style="left:1428px;top:874px;" width="21" height="12" viewBox="0 0 21 12"><rect x="0.6" y="0.6" width="19.8" height="10.8" rx="1.4" fill="none" stroke="#f0f0f0" stroke-width="1.2"/><path d="M3.4 3.6H17.6M3.4 5.8H17.6" stroke="#f0f0f0" stroke-width="1" stroke-dasharray="1.4 0.9"/><path d="M4.4 8.4H16.6" stroke="#f0f0f0" stroke-width="1.1"/></svg>
<span class="t" style="top:868.13px;left:1460px;color:#f4f4f4;letter-spacing:-0.220px;transform:scaleX(0.9280);transform-origin:0 50%;">ENG</span>
<svg style="left:1494px;top:866px;" width="15" height="13" viewBox="0 0 15 13"><path d="M1 4.6 A9.4 9.4 0 0 1 14 4.6" fill="none" stroke="#f2f2f2" stroke-width="1.4" stroke-linecap="round"/><path d="M3.2 7 A6.2 6.2 0 0 1 11.8 7" fill="none" stroke="#f2f2f2" stroke-width="1.4" stroke-linecap="round"/><path d="M5.4 9.2 A3.2 3.2 0 0 1 9.6 9.2" fill="none" stroke="#f2f2f2" stroke-width="1.4" stroke-linecap="round"/><circle cx="7.5" cy="11.4" r="1.1" fill="#f2f2f2"/></svg>
<svg style="left:1515px;top:867px;" width="14" height="13" viewBox="0 0 14 13"><path d="M0.8 4.4 H3 L6 1.4 V11.6 L3 8.6 H0.8Z" fill="none" stroke="#f2f2f2" stroke-width="1.1" stroke-linejoin="round"/><path d="M8 4.4 A3 3 0 0 1 8 8.6 M9.8 2.6 A5.6 5.6 0 0 1 9.8 10.4 M11.6 0.9 A8.2 8.2 0 0 1 11.6 12.1" fill="none" stroke="#f2f2f2" stroke-width="1" stroke-linecap="round"/></svg>
<span class="t" style="top:861.13px;right:16.22px;color:#f4f4f4;letter-spacing:-0.220px;transform:scaleX(0.9268);transform-origin:100% 50%;">11:56</span>
<span class="t" style="top:876.13px;right:16.17px;color:#f4f4f4;letter-spacing:-0.167px;">14/7/2021</span>
<div style="left:167px;top:841px;width:1433px;height:1px;background:#e2e2e2;"></div>
<div style="left:1416px;top:842px;width:1px;height:17px;background:#e4e4e4;"></div>
<div style="left:1417px;top:842px;width:1px;height:17px;background:#fafafa;"></div>
<div style="left:1527px;top:842px;width:1px;height:17px;background:#e4e4e4;"></div>
<div style="left:1528px;top:842px;width:1px;height:17px;background:#fafafa;"></div>
</body></html>
